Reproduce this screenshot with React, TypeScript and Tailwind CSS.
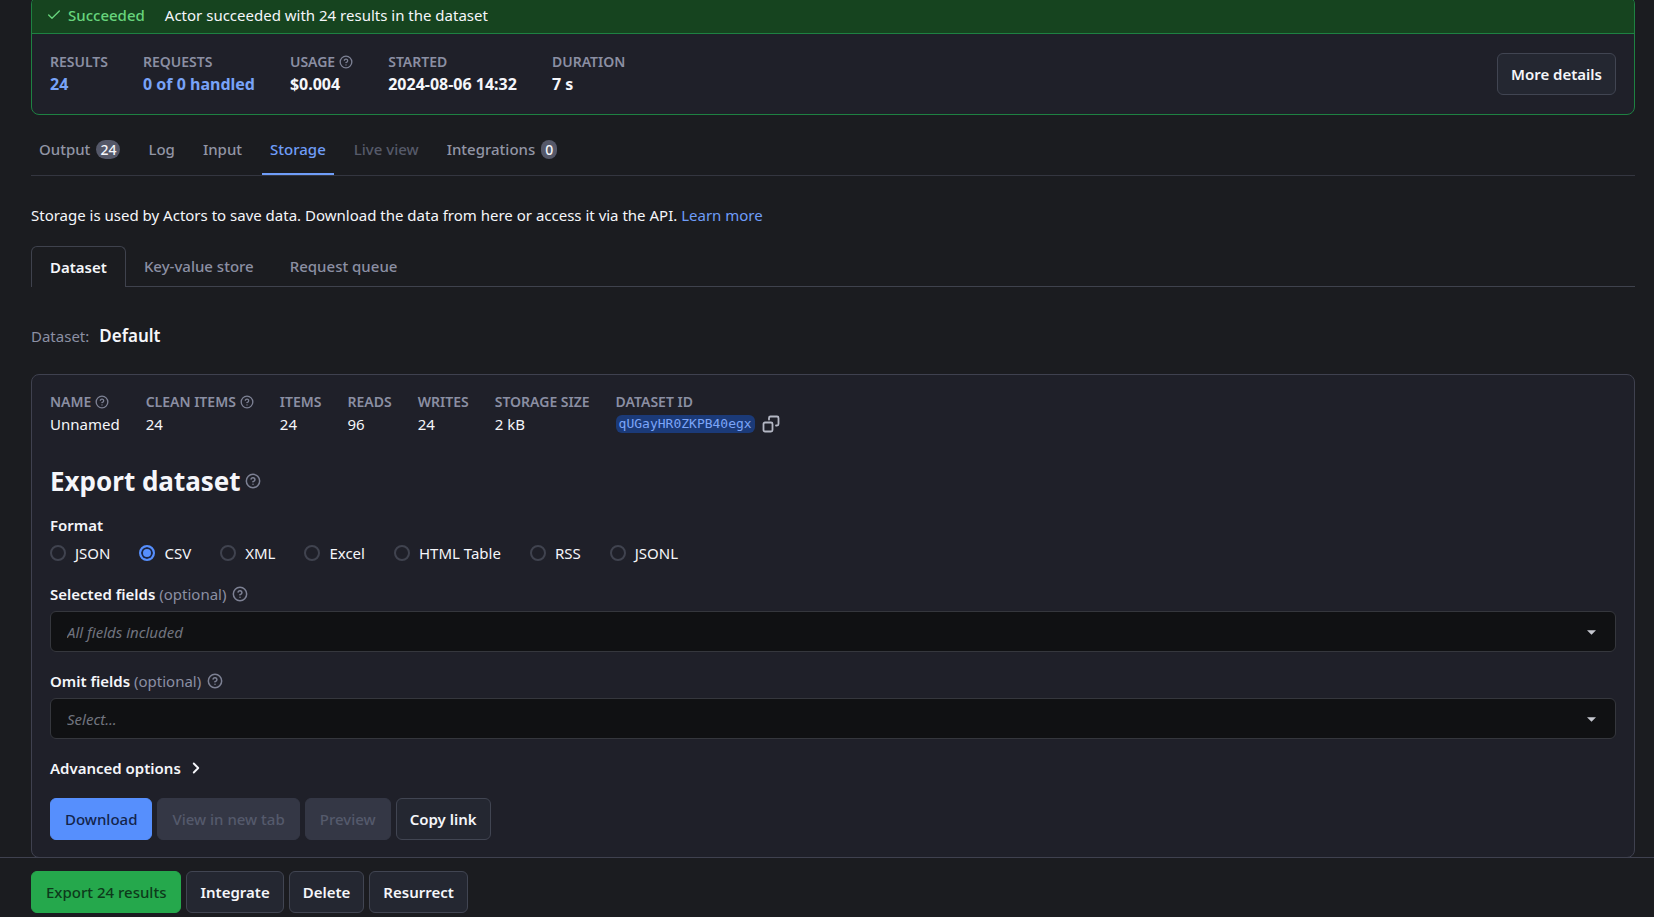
import { useState } from "react";
import type { ReactNode } from "react";
import { Check, ChevronRight, CircleHelp } from "lucide-react";
import clsx from "clsx";

const HelpIcon = ({ className }: { className?: string }) => (
  <CircleHelp
    aria-hidden
    className={clsx("shrink-0 text-[#7d8194]", className)}
    strokeWidth={2.25}
  />
);

const CopyIcon = () => (
  <svg
    viewBox="0 0 18 18"
    className="size-[18px]"
    fill="none"
    stroke="currentColor"
    strokeWidth="1.8"
    strokeLinecap="round"
    strokeLinejoin="round"
  >
    <rect x="1.500" y="7.500" width="9" height="9" rx="1.500" />
    <path d="M7 4.500V3a1.500 1.500 0 0 1 1.500-1.500H15A1.500 1.500 0 0 1 16.500 3v6A1.500 1.500 0 0 1 15 10.500h-1" />
  </svg>
);

type StatProps = {
  label: string;
  help?: boolean;
  children: ReactNode;
};

const Stat = ({ label, help, children }: StatProps) => (
  <div>
    <dt className="flex h-5 items-center gap-1 text-sm font-semibold uppercase text-[#8b8fa3]">
      {label}
      {help && <HelpIcon className="size-[14px]" />}
    </dt>
    <dd className="flex h-6 items-center">{children}</dd>
  </div>
);

const buttonStyles = {
  default:
    "border-[#414552] bg-[#242731] px-[13px] font-semibold text-[#f5f6fa]",
  primary: "border-[#568ffd] bg-[#568ffd] px-3.5 font-medium text-[#13244b]",
  success: "border-[#25a84c] bg-[#25a84c] px-3.5 font-medium text-[#0d3a1b]",
  disabled: "border-[#343745] bg-[#343745] px-3.5 font-medium text-[#555a6c]",
};

type ButtonProps = {
  variant?: keyof typeof buttonStyles;
  children: ReactNode;
};

const Button = ({ variant = "default", children }: ButtonProps) => (
  <button
    type="button"
    disabled={variant === "disabled"}
    className={clsx(
      "h-[42px] whitespace-nowrap rounded-md border",
      buttonStyles[variant]
    )}
  >
    {children}
  </button>
);

const runTabs = [
  { name: "Output", count: 24 },
  { name: "Log" },
  { name: "Input" },
  { name: "Storage" },
  { name: "Live view", disabled: true },
  { name: "Integrations", count: 0 },
];

const storageTabs = ["Dataset", "Key-value store", "Request queue"];

const formats = ["JSON", "CSV", "XML", "Excel", "HTML Table", "RSS", "JSONL"];

const RunSummary = () => (
  <section className="-mt-1 overflow-hidden rounded-lg border border-[#1e8142] bg-[#1f2029]">
    <div className="flex h-[37px] items-center border-b border-[#1e8142] bg-[#16441f] px-3.5">
      <Check className="size-4 text-[#67d47c]" strokeWidth={2} />
      <span className="ml-1.5 font-medium text-[#67d47c]">Succeeded</span>
      <span className="ml-5">
        Actor succeeded with 24 results in the dataset
      </span>
    </div>
    <div className="flex items-center justify-between px-[18px] py-[18px]">
      <dl className="flex gap-[35px] text-base font-bold">
        <Stat label="Results">
          <a href="#results" className="text-[#78a3f8]">
            24
          </a>
        </Stat>
        <Stat label="Requests">
          <a href="#requests" className="text-[#78a3f8]">
            0 of 0 handled
          </a>
        </Stat>
        <Stat label="Usage" help>
          $0.004
        </Stat>
        <Stat label="Started">2024-08-06 14:32</Stat>
        <Stat label="Duration">7 s</Stat>
      </dl>
      <Button>More details</Button>
    </div>
  </section>
);

const RunTabs = () => {
  const [selected, setSelected] = useState("Storage");

  return (
    <nav className="mt-[22px] flex h-[39px] gap-3 border-b border-[#343640]">
      {runTabs.map((tab) => (
        <button
          key={tab.name}
          type="button"
          disabled={tab.disabled}
          onClick={() => setSelected(tab.name)}
          className={clsx(
            "flex items-start gap-1.5 border-b-2 px-2 font-medium",
            tab.name === selected
              ? "border-[#6f9df8] text-[#6f9df8]"
              : "border-transparent",
            tab.disabled && "text-[#565a69]",
            !tab.disabled && tab.name !== selected && "text-[#9295a5]"
          )}
        >
          {tab.name}
          {tab.count !== undefined && (
            <span className="mt-[3px] flex h-[19px] items-center rounded-full bg-[#555869] px-1 text-sm text-[#f5f6fa]">
              {tab.count}
            </span>
          )}
        </button>
      ))}
    </nav>
  );
};

const StorageTabs = () => {
  const [selected, setSelected] = useState("Dataset");

  return (
    <nav className="mt-[19px] flex h-[41px]">
      {storageTabs.map((name) => (
        <button
          key={name}
          type="button"
          onClick={() => setSelected(name)}
          className={clsx(
            "px-[18px]",
            name === selected
              ? "rounded-t-md border border-b-0 border-[#3f424d] font-semibold text-[#f5f6fa]"
              : "border-b border-[#3f424d] font-medium text-[#8b8fa3]"
          )}
        >
          {name}
        </button>
      ))}
      <div className="grow border-b border-[#3f424d]" />
    </nav>
  );
};

type FieldSelectProps = {
  id: string;
  label: string;
  placeholder: string;
};

const FieldSelect = ({ id, label, placeholder }: FieldSelectProps) => (
  <div>
    <div className="flex h-6 items-center">
      <label htmlFor={id} className="font-semibold">
        {label}{" "}
        <span className="font-normal text-[#8b8fa3]">(optional)</span>
      </label>
      <HelpIcon className="ml-1.5 size-4" />
    </div>
    <div className="relative mt-[5px]">
      <select
        id={id}
        className="block h-[41px] w-full appearance-none rounded-md border border-[#35373d] bg-[#101113] px-4 italic text-[#70747f]"
      >
        <option>{placeholder}</option>
      </select>
      <svg
        viewBox="0 0 10 5"
        className="pointer-events-none absolute top-[19px] right-5 h-[5px] w-[9px] fill-[#c6c8d0]"
      >
        <path d="M0 0h10L5 5z" />
      </svg>
    </div>
  </div>
);

const DatasetPanel = () => {
  const [format, setFormat] = useState("CSV");

  return (
    <section className="mt-[25px] rounded-lg border border-[#3f414f] bg-[#1f2029] px-[18px] pt-[17px] pb-[17px]">
      <dl className="flex gap-[26px]">
        <Stat label="Name" help>
          Unnamed
        </Stat>
        <Stat label="Clean items" help>
          24
        </Stat>
        <Stat label="Items">24</Stat>
        <Stat label="Reads">96</Stat>
        <Stat label="Writes">24</Stat>
        <Stat label="Storage size">2 kB</Stat>
        <Stat label="Dataset ID">
          <code className="flex h-[18px] items-center rounded-md bg-[#1b3a78] px-[3px] font-['DejaVu_Sans_Mono',monospace] text-[13px] text-[#7ba5f9]">
            qUGayHR0ZKPB40egx
          </code>
          <button
            type="button"
            aria-label="Copy dataset ID"
            className="ml-[7px] text-[#b4b7c4]"
          >
            <CopyIcon />
          </button>
        </Stat>
      </dl>

      <h2 className="mt-[25px] flex h-10 items-center gap-1 text-[26px] font-bold">
        Export dataset
        <HelpIcon className="size-4" />
      </h2>

      <fieldset className="mt-3">
        <legend className="h-6 font-semibold">Format</legend>
        <div className="mt-1 flex gap-[29px]">
          {formats.map((name) => (
            <label key={name} className="flex h-6 items-center gap-[9px]">
              <input
                type="radio"
                name="format"
                checked={format === name}
                onChange={() => setFormat(name)}
                className="size-4 appearance-none rounded-full border-2 border-[#40434f] checked:border-[#568ffd] checked:bg-[#568ffd] checked:shadow-[inset_0_0_0_2px_#1b2440]"
              />
              {name}
            </label>
          ))}
        </div>
      </fieldset>

      <div className="mt-[17px] flex flex-col gap-[17px]">
        <FieldSelect
          id="selected-fields"
          label="Selected fields"
          placeholder="All fields included"
        />
        <FieldSelect
          id="omit-fields"
          label="Omit fields"
          placeholder="Select..."
        />
      </div>

      <button
        type="button"
        className="mt-[17px] flex h-6 items-center gap-1.5 font-semibold"
      >
        Advanced options
        <ChevronRight className="size-[18px]" strokeWidth={2.5} />
      </button>

      <div className="mt-[18px] flex gap-[5px]">
        <Button variant="primary">Download</Button>
        <Button variant="disabled">View in new tab</Button>
        <Button variant="disabled">Preview</Button>
        <Button>Copy link</Button>
      </div>
    </section>
  );
};

export default function App() {
  return (
    <div className="flex h-screen flex-col bg-[#1b1c20] font-['Noto_Sans',sans-serif] text-[15px] leading-6 text-[#f5f6fa]">
      <main className="min-h-0 grow overflow-hidden pr-[19px] pl-[31px]">
        <RunSummary />
        <RunTabs />
        <p className="mt-[27px]">
          Storage is used by Actors to save data. Download the data from here or
          access it via the API.{" "}
          <a href="#learn-more" className="text-[#6f9df8]">
            Learn more
          </a>
        </p>
        <StorageTabs />
        <div className="mt-9 flex h-[26px] items-center gap-2.5">
          <span className="text-[#8b8fa3]">Dataset:</span>
          <span className="text-[17px] font-semibold">Default</span>
        </div>
        <DatasetPanel />
      </main>
      <footer className="flex shrink-0 gap-[5px] border-t border-[#3f414f] pt-[13px] pr-[19px] pb-1 pl-[31px]">
        <Button variant="success">Export 24 results</Button>
        <Button>Integrate</Button>
        <Button>Delete</Button>
        <Button>Resurrect</Button>
      </footer>
    </div>
  );
}
